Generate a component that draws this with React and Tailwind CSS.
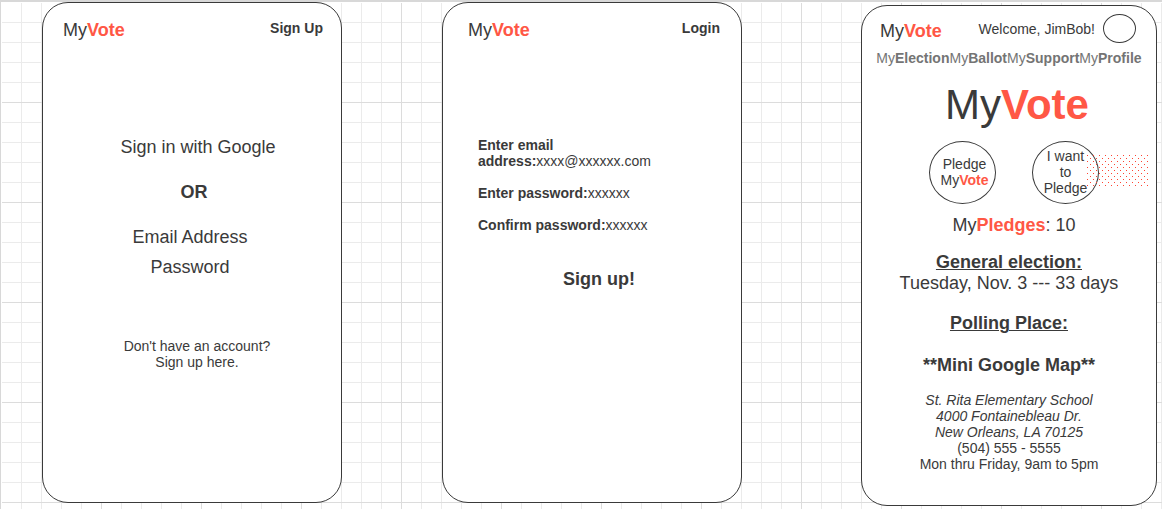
const gridLines =
  "bg-white bg-[linear-gradient(#fff,#fff),linear-gradient(#fff,#fff),linear-gradient(to_right,#dcdcdc_1px,transparent_1px),linear-gradient(to_bottom,#dcdcdc_1px,transparent_1px),linear-gradient(to_right,#ebebeb_1px,transparent_1px),linear-gradient(to_bottom,#ebebeb_1px,transparent_1px)] bg-[size:1px_100%,100%_1px,100px_100px,100px_100px,20px_20px,20px_20px] [background-repeat:no-repeat,no-repeat,repeat,repeat,repeat,repeat]";

function Phone({ className, children }) {
  return (
    <section
      className={`min-h-[501px] min-w-0 rounded-[26px] border border-[#3a3a3a] bg-white ${className}`}
    >
      {children}
    </section>
  );
}

function Brand() {
  return (
    <span className="text-[18px] leading-[21px]">
      My<b className="text-[#ff5745]">Vote</b>
    </span>
  );
}

function LoginScreen() {
  return (
    <Phone className="flex-[300_1_0%]">
      <header className="flex items-start justify-between pt-[17px] pr-[18px] pl-5">
        <Brand />
        <a href="#signup" className="font-bold leading-4">
          Sign Up
        </a>
      </header>
      <form className="mt-24 flex flex-col items-center text-[18px] leading-[21px]">
        <button type="button" className="ml-3">
          Sign in with Google
        </button>
        <p className="mt-6 ml-1 font-bold">OR</p>
        <input
          type="email"
          aria-label="Email Address"
          placeholder="Email Address"
          className="mt-6 mr-1 h-[21px] w-40 text-center outline-none placeholder:text-[#3a3a3a]"
        />
        <input
          type="password"
          aria-label="Password"
          placeholder="Password"
          className="mt-[9px] mr-1 h-[21px] w-40 text-center outline-none placeholder:text-[#3a3a3a]"
        />
      </form>
      <p className="mt-15 pl-[10px] text-center">
        Don't have an account?
        <br />
        <a href="#signup">Sign up here.</a>
      </p>
    </Phone>
  );
}

const fieldClass =
  "h-4 w-32 align-top leading-4 outline-none placeholder:text-[#3a3a3a]";

function SignUpScreen() {
  return (
    <Phone className="ml-[100px] flex-[300_1_0%]">
      <header className="flex items-start justify-between pt-[17px] pr-[21px] pl-[25px]">
        <Brand />
        <a href="#login" className="font-bold leading-4">
          Login
        </a>
      </header>
      <form className="mt-24">
        <div className="flex flex-col gap-4 pl-[35px]">
          <div>
            <label htmlFor="new-email" className="font-bold">
              Enter email
              <br />
              address:
            </label>
            <input id="new-email" type="email" placeholder="xxxx@xxxxxx.com" className={fieldClass} />
          </div>
          <div>
            <label htmlFor="new-password" className="font-bold">
              Enter password:
            </label>
            <input id="new-password" type="password" placeholder="xxxxxx" className={fieldClass} />
          </div>
          <div>
            <label htmlFor="confirm-password" className="font-bold">
              Confirm password:
            </label>
            <input id="confirm-password" type="password" placeholder="xxxxxx" className={fieldClass} />
          </div>
        </div>
        <div className="mt-9 flex justify-center pl-[14px]">
          <button type="submit" className="text-[18px] font-bold leading-[21px]">
            Sign up!
          </button>
        </div>
      </form>
    </Phone>
  );
}

const sections = ["Election", "Ballot", "Support", "Profile"];

function HomeScreen() {
  return (
    <Phone className="mt-[3px] ml-[119px] flex-[296_1_0%] text-center">
      <header className="flex items-start justify-between pt-2 pr-5 pl-[18px]">
        <div className="flex pt-[7px]">
          <Brand />
        </div>
        <div className="flex gap-2">
          <p className="pt-[7px] leading-4">Welcome, JimBob!</p>
          <a
            href="#profile"
            aria-label="Profile picture"
            className="h-[29px] w-[33px] rounded-[50%] border border-[#3a3a3a]"
          />
        </div>
      </header>
      <nav className="mt-[7px] flex justify-center text-[#747474]">
        {sections.map((name) => (
          <a key={name} href={`#${name}`}>
            My<b>{name}</b>
          </a>
        ))}
      </nav>
      <h1 className="mt-[15px] pl-4 text-[42px] leading-[48px]">
        My<b className="text-[#ff5745]">Vote</b>
      </h1>
      <div className="mt-3 flex justify-center gap-9 pl-[10px]">
        <button
          type="button"
          className="h-[63px] w-[67px] rounded-[50%] border border-[#3a3a3a] pb-0.5 pl-1 leading-4"
        >
          Pledge
          <br />
          My<b className="text-[#ff5745]">Vote</b>
        </button>
        <button
          type="button"
          className="relative h-[63px] w-[67px] rounded-[50%] border border-[#3a3a3a] pb-0.5 leading-4"
        >
          I want
          <br />
          to
          <br />
          Pledge
          <svg
            className="absolute top-[13px] left-[54px] max-w-none"
            width="61"
            height="31"
            shapeRendering="crispEdges"
            aria-hidden="true"
          >
            <defs>
              <pattern id="dots" width="6" height="6" patternUnits="userSpaceOnUse">
                <rect width="1" height="1" fill="#ff4433" />
                <rect x="3" y="3" width="1" height="1" fill="#ff4433" />
              </pattern>
            </defs>
            <rect width="61" height="31" fill="url(#dots)" />
          </svg>
        </button>
      </div>
      <p className="mt-[11px] pl-[10px] text-[18px] leading-[21px]">
        My<b className="text-[#ff5745]">Pledges</b>: 10
      </p>
      <div className="mt-4 text-[18px] leading-[21px]">
        <h2 className="font-bold underline decoration-1">General election:</h2>
        <p>Tuesday, Nov. 3 --- 33 days</p>
        <h2 className="mt-[19px] font-bold underline decoration-1">Polling Place:</h2>
        <p className="mt-[21px] font-bold">**Mini Google Map**</p>
      </div>
      <address className="mt-4">
        St. Rita Elementary School
        <br />
        4000 Fontainebleau Dr.
        <br />
        New Orleans, LA 70125
      </address>
      <p>(504) 555 - 5555</p>
      <p>Mon thru Friday, 9am to 5pm</p>
    </Phone>
  );
}

export default function App() {
  return (
    <div className="min-h-screen border-t-2 border-l border-[#d8d8d8] font-['Liberation_Sans',Arial,sans-serif] text-[14px] leading-4 text-[#3a3a3a]">
      <main className={`flex min-h-[507px] items-start pr-[5px] pl-[41px] ${gridLines}`}>
        <LoginScreen />
        <SignUpScreen />
        <HomeScreen />
      </main>
    </div>
  );
}
